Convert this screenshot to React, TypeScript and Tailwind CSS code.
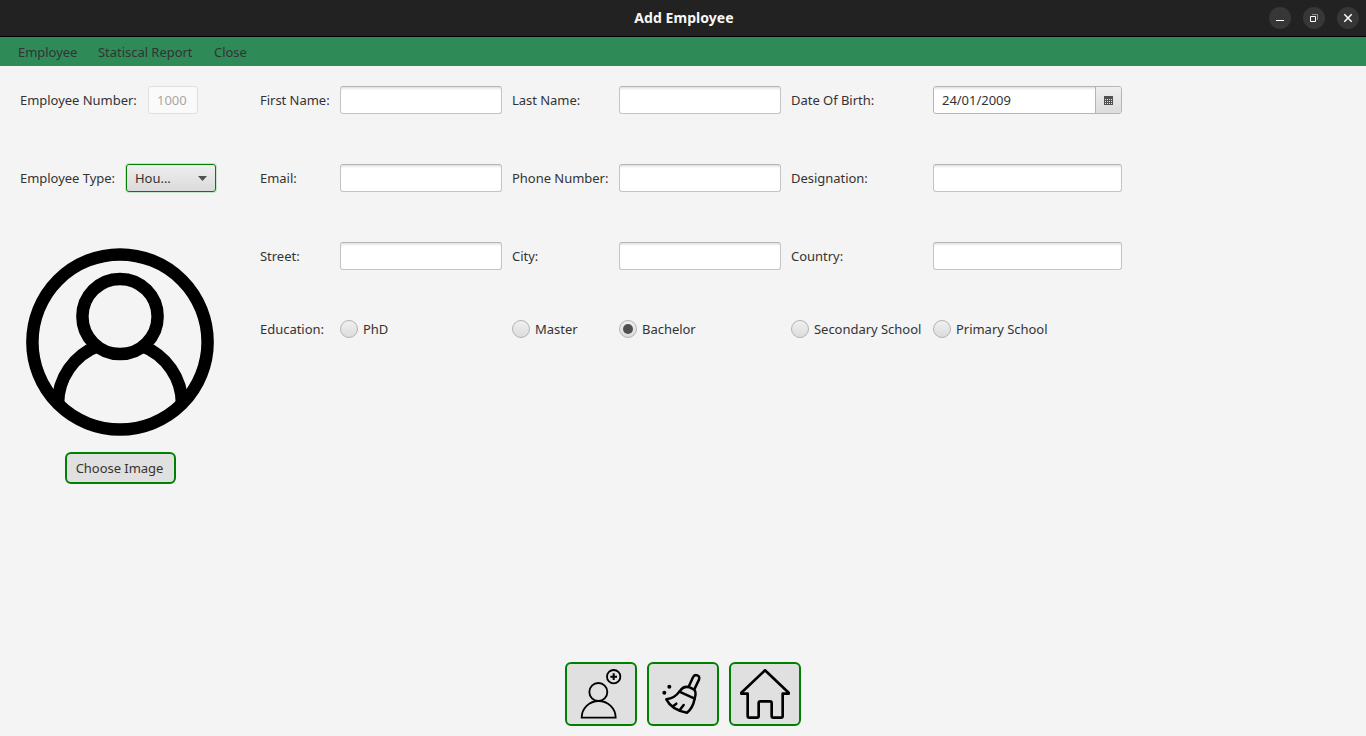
import { useState, type ReactNode } from "react";

const GREEN_BUTTON =
  "flex items-center justify-center rounded-[6px] border-2 border-[#008000] bg-[#e0e0e0]";

function WindowButton({ label, children }: { label: string; children: ReactNode }) {
  return (
    <button aria-label={label} className="size-[22px] rounded-full bg-[#373737]">
      <svg width="22" height="22" viewBox="0 0 22 22" fill="none">
        {children}
      </svg>
    </button>
  );
}

function TitleBar() {
  return (
    <header className="grid h-[37px] grid-cols-[1fr_auto_1fr] items-center border-b border-black bg-[#222222]">
      <span />
      <h1 className="pl-[2px] font-['Noto_Sans',sans-serif] text-[14px] leading-[18px] font-bold tracking-[0.05px] text-[#f7f7f7]">
        Add Employee
      </h1>
      <div className="flex justify-end gap-3 pr-[7px]">
        <WindowButton label="Minimize">
          <path d="M7 13.5h8" stroke="#fff" />
        </WindowButton>
        <WindowButton label="Restore">
          <path d="M7.500 9.500h5v5h-5z" stroke="#fff" />
          <path d="M9 7.500h5.500v5.500" stroke="#8e8e8e" />
        </WindowButton>
        <WindowButton label="Close window">
          <path d="M7.300 7.300l7.400 7.400M14.700 7.300l-7.400 7.400" stroke="#fff" strokeWidth="1.500" />
        </WindowButton>
      </div>
    </header>
  );
}

function TextField({ label }: { label: string }) {
  return (
    <>
      <label className="self-center whitespace-nowrap">{label}:</label>
      <input
        aria-label={label}
        className="h-7 w-full rounded-[3px] border border-[#c4c4c4] border-t-[#b5b5b5] bg-white px-2 shadow-[inset_0_3px_3px_-2px_#d4d4d4] outline-none"
      />
    </>
  );
}

function Radio({ label, checked, onSelect }: { label: string; checked: boolean; onSelect: () => void }) {
  return (
    <button role="radio" aria-checked={checked} onClick={onSelect} className="flex h-[18px] items-center gap-[5px] whitespace-nowrap">
      <span className="flex size-[18px] items-center justify-center rounded-full border border-[#b3b3b3] bg-linear-to-b from-[#f0f0f0] to-[#dcdcdc]">
        {checked && <span className="size-[10px] rounded-full bg-[#505050]" />}
      </span>
      {label}
    </button>
  );
}

function Avatar() {
  return (
    <svg width="200" height="200" viewBox="0 0 200 200" fill="none" stroke="#000" strokeWidth="12.500">
      <circle cx="100" cy="100" r="87.600" />
      <circle cx="100" cy="74.500" r="37.600" />
      <path d="M38 162A62 62 0 0 1 78 104M162 162A62 62 0 0 0 122 104" />
    </svg>
  );
}

function AddUserIcon() {
  return (
    <svg width="68" height="60" viewBox="0 0 204 180" fill="none" stroke="#000" strokeWidth="5.500">
      <circle cx="140" cy="38" r="20" />
      <path d="M140 28v20M130 38h20" strokeWidth="6" />
      <circle cx="94" cy="84" r="27" />
      <path d="M44 161A51 50 0 0 1 146 161Z" />
    </svg>
  );
}

function BroomIcon() {
  return (
    <svg width="68" height="60" viewBox="0 0 204 180" fill="none" stroke="#000" strokeWidth="7.500" strokeLinecap="round" strokeLinejoin="round">
      <path d="M119 68L132 40C137 28 155 34 150 47L136 76" />
      <path d="M92 83C100 69 112 67 122 70L134 76C142 82 141 92 137 104L91 83" />
      <path d="M91 83C80 99 67 104 52 106C64 130 87 141 114 146C127 136 133 124 137 104" />
      <path d="M72 127L82 119M94 136L104 123" />
      <circle cx="61" cy="68" r="6" fill="#000" stroke="none" />
      <circle cx="46" cy="86" r="6" fill="#000" stroke="none" />
    </svg>
  );
}

function HomeIcon() {
  return (
    <svg width="68" height="60" viewBox="0 0 204 180" fill="none" stroke="#000" strokeWidth="8" strokeLinecap="round" strokeLinejoin="round">
      <path d="M102 19L31 86V89H50V156Q50 161 55 161H78Q83 161 83 156V117Q83 112 88 112H117Q122 112 122 117V156Q122 161 127 161H150Q155 161 155 156V89H173V86Z" />
    </svg>
  );
}

const CALENDAR_DOTS = [0, 1, 2, 3].flatMap((c) => [0, 1, 2].map((r) => ({ x: 1 + c * 2, y: 3 + r * 2 })));

export default function App() {
  const [education, setEducation] = useState("Bachelor");
  const radio = (name: string) => (
    <Radio label={name} checked={education === name} onSelect={() => setEducation(name)} />
  );

  return (
    <div className="flex h-[736px] w-[1366px] flex-col overflow-hidden bg-[#f4f4f4] font-['Noto_Sans',sans-serif] text-[13px] leading-[18px] tracking-[-0.03px] text-[#333333]">
      <TitleBar />
      <nav className="flex h-[29px] shrink-0 items-center gap-[21px] bg-[#2e8b57] pl-[18px]">
        <span className="w-[59px]">Employee</span>
        <span className="w-[95px] whitespace-nowrap">Statiscal Report</span>
        <span>Close</span>
      </nav>

      <main className="flex flex-1 items-start pt-5 pl-5">
        <section className="flex w-60 flex-col">
          <div className="flex h-7 items-center gap-[10px]">
            <label className="w-[118px]">Employee Number:</label>
            <div className="flex h-7 w-[50px] items-center rounded-[3px] border border-[#e0e0e0] bg-[#fafafa] pl-2 text-[#a7a7a7]">
              1000
            </div>
          </div>
          <div className="mt-[50px] flex h-7 items-center gap-[10px]">
            <label className="w-24">Employee Type:</label>
            <button className="flex h-7 w-[90px] items-center justify-between rounded-[3px] border border-[#008000] bg-linear-to-b from-[#efefef] to-[#dadada] pr-2 pl-2 shadow-[0_0_0_1px_#c9e0c9]">
              <span>Hou...</span>
              <svg width="9" height="5" viewBox="0 0 9 5" fill="#505050">
                <path d="M0 0h9L4.500 5z" />
              </svg>
            </button>
          </div>
          <div className="mt-[50px] flex w-[200px] flex-col items-center gap-[10px]">
            <Avatar />
            <button className={`${GREEN_BUTTON} h-8 w-[111px] pr-px`}>Choose Image</button>
          </div>
        </section>

        <section className="grid grid-cols-[70px_162px_97px_162px_132px_189px] gap-x-[10px] gap-y-[50px]">
          <TextField label="First Name" />
          <TextField label="Last Name" />
          <label className="self-center">Date Of Birth:</label>
          <div className="flex h-7 overflow-hidden rounded-[3px] border border-[#b5b5b5] bg-white">
            <input
              aria-label="Date Of Birth"
              defaultValue="24/01/2009"
              className="min-w-0 flex-1 px-2 shadow-[inset_0_3px_3px_-2px_#d4d4d4] outline-none"
            />
            <button aria-label="Open calendar" className="flex w-[26px] items-center justify-center border-l border-[#b5b5b5] bg-linear-to-b from-[#efefef] to-[#dcdcdc]">
              <svg width="9" height="9" viewBox="0 0 9 9" shapeRendering="crispEdges">
                <rect width="9" height="9" fill="#505050" />
                {CALENDAR_DOTS.map((d) => (
                  <rect key={`${d.x}-${d.y}`} x={d.x} y={d.y} width="1" height="1" fill="#e4e4e4" />
                ))}
              </svg>
            </button>
          </div>

          <TextField label="Email" />
          <TextField label="Phone Number" />
          <TextField label="Designation" />

          <TextField label="Street" />
          <TextField label="City" />
          <TextField label="Country" />

          <label className="self-center">Education:</label>
          {radio("PhD")}
          {radio("Master")}
          {radio("Bachelor")}
          {radio("Secondary School")}
          {radio("Primary School")}
        </section>
      </main>

      <footer className="flex justify-center gap-[10px] pb-[10px]">
        <button aria-label="Add employee" className={`${GREEN_BUTTON} h-16 w-[72px]`}>
          <AddUserIcon />
        </button>
        <button aria-label="Clear form" className={`${GREEN_BUTTON} h-16 w-[72px]`}>
          <BroomIcon />
        </button>
        <button aria-label="Home" className={`${GREEN_BUTTON} h-16 w-[72px]`}>
          <HomeIcon />
        </button>
      </footer>
    </div>
  );
}
